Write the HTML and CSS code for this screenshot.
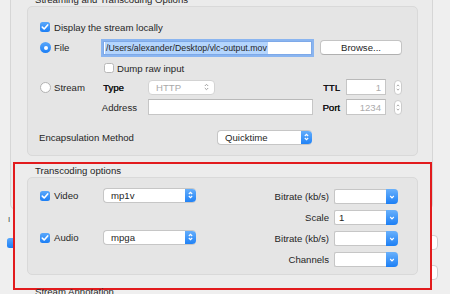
FILE: index.html
```html
<!DOCTYPE html>
<html>
<head>
<meta charset="utf-8">
<link rel="stylesheet" href="styles.css">
</head>
<body>
<div class="screen">
  <div class="behind">
    <div class="panel"></div>
    <span class="peek-text">I</span>
    <span class="peek-check"></span>
    <span class="peek-field pf1"></span>
    <span class="peek-field pf2"></span>
  </div>
  <div class="annotation"></div>
  <div class="content">
    <div class="gtitle first">Streaming and Transcoding Options</div>
    <div class="group g1">
      <div class="row ra">
        <span class="cb on"><svg viewBox="0 0 10 10"><path d="M2.3 5.1 L4.2 7 L7.7 2.9" /></svg></span>
        <span class="lbl">Display the stream locally</span>
      </div>
      <div class="row rb">
        <span class="col1"><span class="radio on"><i></i></span><span class="lbl">File</span></span>
        <span class="field focus"><span class="sel">/Users/alexander/Desktop/vlc-output.mov</span></span>
        <span class="button">Browse...</span>
      </div>
      <div class="row rc">
        <span class="cb off"></span>
        <span class="lbl">Dump raw input</span>
      </div>
      <div class="row rd">
        <span class="col1 c1d"><span class="radio off"></span><span class="lbl">Stream</span></span>
        <span class="lbl semi typel">Type</span>
        <span class="popup disabled http"><span class="ptext">HTTP</span><svg class="updown" viewBox="0 0 7 10"><path d="M1.8 4 L3.5 2.3 L5.2 4 M1.8 6 L3.5 7.7 L5.2 6"/></svg></span>
        <span class="lbl semi rlabel ttl">TTL</span>
        <span class="field num">1</span>
        <span class="stepper"><svg viewBox="0 0 8 15"><path d="M2.3 5.6 L4 4 L5.7 5.6 M2.3 9.4 L4 11 L5.7 9.4"/></svg></span>
      </div>
      <div class="row re">
        <span class="lbl rlabel addr">Address</span>
        <span class="field address"></span>
        <span class="lbl semi rlabel port">Port</span>
        <span class="field num">1234</span>
        <span class="stepper"><svg viewBox="0 0 8 15"><path d="M2.3 5.6 L4 4 L5.7 5.6 M2.3 9.4 L4 11 L5.7 9.4"/></svg></span>
      </div>
      <div class="row rf">
        <span class="lbl encl">Encapsulation Method</span>
        <span class="popup blue enc"><span class="ptext">Quicktime</span><span class="pend"><svg viewBox="0 0 7 10"><path d="M1.8 4 L3.5 2.3 L5.2 4 M1.8 6 L3.5 7.7 L5.2 6"/></svg></span></span>
      </div>
    </div>

    <div class="gtitle second">Transcoding options</div>
    <div class="group g2">
      <div class="tgrid">
        <span class="tcheck r1"><span class="cb on"><svg viewBox="0 0 10 10"><path d="M2.3 5.1 L4.2 7 L7.7 2.9" /></svg></span><span class="lbl">Video</span></span>
        <span class="popup blue codec r1"><span class="ptext">mp1v</span><span class="pend"><svg viewBox="0 0 7 10"><path d="M1.8 4 L3.5 2.3 L5.2 4 M1.8 6 L3.5 7.7 L5.2 6"/></svg></span></span>
        <span class="lbl tlabel r1">Bitrate (kb/s)</span>
        <span class="combo r1"><span class="ctext"></span><span class="cend"><svg viewBox="0 0 8 10"><path d="M2.2 4 L4 5.8 L5.8 4"/></svg></span></span>

        <span class="lbl tlabel r2">Scale</span>
        <span class="combo r2"><span class="ctext">1</span><span class="cend"><svg viewBox="0 0 8 10"><path d="M2.2 4 L4 5.8 L5.8 4"/></svg></span></span>

        <span class="tcheck r3"><span class="cb on"><svg viewBox="0 0 10 10"><path d="M2.3 5.1 L4.2 7 L7.7 2.9" /></svg></span><span class="lbl">Audio</span></span>
        <span class="popup blue codec r3"><span class="ptext">mpga</span><span class="pend"><svg viewBox="0 0 7 10"><path d="M1.8 4 L3.5 2.3 L5.2 4 M1.8 6 L3.5 7.7 L5.2 6"/></svg></span></span>
        <span class="lbl tlabel r3">Bitrate (kb/s)</span>
        <span class="combo r3"><span class="ctext"></span><span class="cend"><svg viewBox="0 0 8 10"><path d="M2.2 4 L4 5.8 L5.8 4"/></svg></span></span>

        <span class="lbl tlabel r4">Channels</span>
        <span class="combo r4"><span class="ctext"></span><span class="cend"><svg viewBox="0 0 8 10"><path d="M2.2 4 L4 5.8 L5.8 4"/></svg></span></span>
      </div>
    </div>

    <div class="gtitle third">Stream Annotation</div>
  </div>
</div>
</body>
</html>
```

FILE: styles.css
```css
* { box-sizing: border-box; }
html, body { margin: 0; padding: 0; }
body {
  background: #efefef;
  font-family: "Liberation Sans", Arial, sans-serif;
  font-size: 9.6px;
  color: #262626;
}
.screen {
  position: relative;
  width: 450px;
  height: 294px;
  overflow: hidden;
}

/* window behind the sheet */
.behind { position: absolute; inset: 0; z-index: 0; }
.panel {
  position: absolute;
  left: 10px; top: -10px;
  width: 423px; height: 220px;
  background: #ebebeb;
  border: 1px solid #d6d6d6;
  border-radius: 6px;
}
.peek-text {
  position: absolute;
  left: 8px; top: 215px;
  font-size: 8px;
  color: #444;
}
.peek-check {
  position: absolute;
  left: 7px; top: 238px;
  width: 10px; height: 10px;
  border-radius: 2.5px;
  background: linear-gradient(#5aa8fb, #1b7ef5);
}
.peek-field {
  position: absolute;
  left: 380px;
  width: 58px; height: 15px;
  background: #fff;
  border: 1px solid #cfcfcf;
  border-radius: 4px;
}
.pf1 { top: 235px; }
.pf2 { top: 265px; }

/* red annotation frame */
.annotation {
  position: absolute;
  left: 13px; top: 162px;
  width: 419px; height: 128px;
  border: 2px solid #e21b1d;
  background: #ececec;
  z-index: 1;
}

.content {
  position: relative;
  z-index: 2;
  margin-top: -6px;
  padding-left: 27px;
  width: 418px;
}
.gtitle {
  height: 12px;
  line-height: 12px;
  padding-left: 8px;
  color: #262626;
}
.gtitle.second { margin-top: 9px; }
.gtitle.third { margin-top: 11px; }

.group {
  width: 391px;
  background: #e5e5e5;
  border: 1px solid #d9d9d9;
  border-radius: 5px;
}
.g1 { padding: 13px 0 10px 12px; }
.g2 { padding: 11px 0 7px 12px; }

.row { display: flex; align-items: center; }
.ra { height: 14px; }
.rb { height: 17px; margin-top: 5px; }
.rc { height: 14px; margin-top: 5px; padding-left: 64px; }
.rd { height: 16px; margin-top: 4px; }
.re { height: 16px; margin-top: 4px; }
.rf { height: 16px; margin-top: 14px; }

.lbl { white-space: nowrap; }
.semi { color: #111; text-shadow: 0.3px 0 0 #111; }

/* checkbox */
.cb {
  width: 10px; height: 10px;
  border-radius: 2.5px;
  display: inline-flex;
  flex: none;
  margin-right: 4px;
}
.cb.on { background: linear-gradient(#5aa8fb, #1b7ef5); }
.cb.on svg { width: 10px; height: 10px; }
.cb.on path { stroke: #fff; stroke-width: 1.6; fill: none; stroke-linecap: round; stroke-linejoin: round; }
.cb.off { background: #fff; border: 1px solid #b8b8b8; margin-right: 3px; }

/* radio */
.radio {
  width: 11px; height: 11px;
  border-radius: 50%;
  display: inline-flex;
  align-items: center;
  justify-content: center;
  flex: none;
  margin-right: 3px;
}
.radio.on { background: linear-gradient(#5aa8fb, #1b7ef5); }
.radio.on i { width: 4px; height: 4px; border-radius: 50%; background: #fff; }
.radio.off { background: #fff; border: 1px solid #b3b3b3; }

.col1 { display: flex; align-items: center; width: 61px; flex: none; }
.c1d { width: 63px; }

/* text fields */
.field {
  display: flex;
  align-items: center;
  height: 16px;
  background: #fff;
  border: 1px solid #c6c6c6;
  border-top-color: #b9b9b9;
  flex: none;
}
.field.focus {
  width: 209px;
  height: 14px;
  margin: 0 2px;
  box-shadow: 0 0 0 2px #8ab5f0;
  border-color: #7ea9e8;
  padding-left: 1px;
  font-size: 8.8px;
}
.sel { background: #b4d5fd; padding: 0 1px; line-height: 12px; }
.field.num {
  width: 40px;
  justify-content: flex-end;
  padding-right: 4px;
  color: #ababab;
}
.field.address { width: 165px; margin-right: 0; }

.button {
  width: 82px; height: 15px;
  margin-left: 6px;
  display: flex; align-items: center; justify-content: center;
  background: #fff;
  border: 1px solid #c4c4c4;
  border-bottom-color: #b0b0b0;
  border-radius: 4px;
  flex: none;
}

.stepper {
  width: 8px; height: 15px;
  margin-left: 8px;
  background: #fff;
  border: 1px solid #cbcbcb;
  border-radius: 4px;
  display: flex;
  flex: none;
}
.stepper svg { width: 6px; height: 13px; }
.stepper path { stroke: #8a8a8a; stroke-width: 1; fill: none; }

.typel { width: 45px; flex: none; }
.rlabel { text-align: right; flex: none; margin-right: 6px; }
.ttl { width: 125px; }
.addr { width: 97px; margin-right: 11px; }
.port { width: 27px; }
.encl { width: 178px; flex: none; padding-left: 0; margin-left: -1px; }

/* popups */
.popup {
  display: flex;
  align-items: center;
  height: 15px;
  background: #fff;
  border: 1px solid #c6c6c6;
  border-radius: 4px;
  flex: none;
  overflow: hidden;
}
.ptext { flex: 1; padding-left: 7px; white-space: nowrap; }
.popup.disabled { color: #a9a9a9; border-color: #d3d3d3; }
.http { width: 67px; }
.updown { width: 7px; height: 10px; margin-right: 4px; }
.updown path { stroke: #a0a0a0; stroke-width: 1; fill: none; }
.popup.blue { border-right: none; }
.pend {
  width: 11px; height: 15px;
  margin-top: -1px; margin-bottom: -1px;
  background: linear-gradient(#69b1fc, #1c7ff5);
  display: flex; align-items: center; justify-content: center;
  border-radius: 0 4px 4px 0;
}
.pend svg { width: 7px; height: 10px; }
.pend path { stroke: #fff; stroke-width: 1.1; fill: none; }
.enc { width: 95px; }

/* transcoding grid */
.tgrid {
  display: grid;
  grid-template-columns: 63px 93px 138px 64px;
  grid-template-rows: 15px 15px 15px 15px;
  row-gap: 6px;
  align-items: center;
}
.r1 { grid-row: 1; }
.r2 { grid-row: 2; }
.r3 { grid-row: 3; }
.r4 { grid-row: 4; }
.tcheck { grid-column: 1; display: flex; align-items: center; margin-top: -2px; }
.codec { grid-column: 2; margin-top: -3px; }
.tlabel { grid-column: 3; text-align: right; padding-right: 5px; }
.combo {
  grid-column: 4;
  display: flex;
  height: 15px;
  background: #fff;
  border: 1px solid #c6c6c6;
  border-right: none;
  border-radius: 2px 4px 4px 2px;
}
.ctext { flex: 1; padding-left: 4px; line-height: 13px; }
.cend {
  width: 12px;
  margin-top: -1px; margin-bottom: -1px;
  background: linear-gradient(#69b1fc, #1c7ff5);
  border-radius: 0 4px 4px 0;
  display: flex; align-items: center; justify-content: center;
}
.cend svg { width: 8px; height: 10px; }
.cend path { stroke: #fff; stroke-width: 1.2; fill: none; }
```
